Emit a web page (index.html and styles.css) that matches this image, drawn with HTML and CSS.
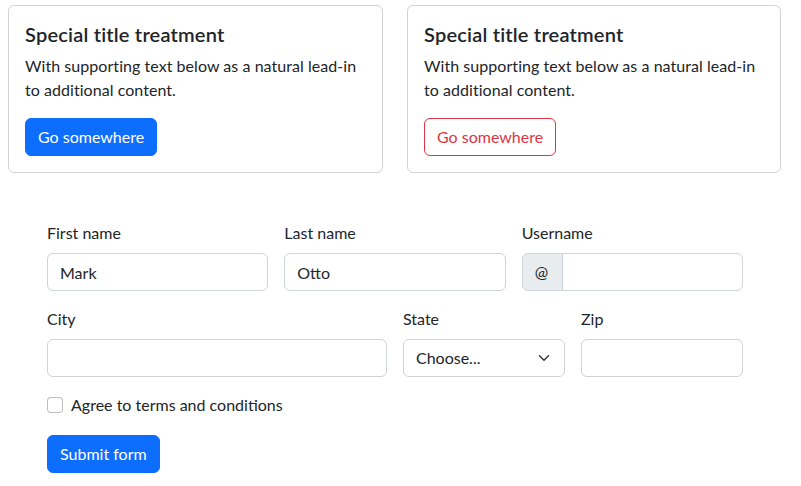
FILE: index.html
```html
<!DOCTYPE html>
<html lang="en">
<head>
<meta charset="utf-8">
<title>Cards and form</title>
<link rel="stylesheet" href="styles.css">
</head>
<body>
<div class="page">
  <div class="cards">
    <div class="card">
      <h5 class="card-title">Special title treatment</h5>
      <p class="card-text">With supporting text below as a natural lead-in to additional content.</p>
      <a href="#" class="btn btn-primary">Go somewhere</a>
    </div>
    <div class="card">
      <h5 class="card-title">Special title treatment</h5>
      <p class="card-text">With supporting text below as a natural lead-in to additional content.</p>
      <a href="#" class="btn btn-outline-danger">Go somewhere</a>
    </div>
  </div>

  <form class="form">
    <div class="field span-4">
      <label class="form-label" for="fn">First name</label>
      <input class="form-control" id="fn" type="text" value="Mark">
    </div>
    <div class="field span-4">
      <label class="form-label" for="ln">Last name</label>
      <input class="form-control" id="ln" type="text" value="Otto">
    </div>
    <div class="field span-4">
      <label class="form-label" for="un">Username</label>
      <div class="input-group">
        <span class="input-group-text">@</span>
        <input class="form-control" id="un" type="text">
      </div>
    </div>
    <div class="field span-6">
      <label class="form-label" for="city">City</label>
      <input class="form-control" id="city" type="text">
    </div>
    <div class="field span-3">
      <label class="form-label" for="state">State</label>
      <select class="form-select" id="state">
        <option>Choose...</option>
      </select>
    </div>
    <div class="field span-3">
      <label class="form-label" for="zip">Zip</label>
      <input class="form-control" id="zip" type="text">
    </div>
    <div class="field span-12">
      <div class="form-check">
        <input class="form-check-input" type="checkbox" id="agree">
        <label class="form-check-label" for="agree">Agree to terms and conditions</label>
      </div>
    </div>
    <div class="field span-12">
      <button class="btn btn-primary" type="submit">Submit form</button>
    </div>
  </form>
</div>
</body>
</html>
```

FILE: styles.css
```css
* { box-sizing: border-box; }
html, body { margin: 0; padding: 0; background: #fff; }
body {
  font-family: "Segoe UI", Lato, "Noto Sans", "Liberation Sans", sans-serif;
  font-size: 16px;
  line-height: 24px;
  color: #212529;
}
.page { padding: 5px 20px 0 8px; }

.cards {
  display: grid;
  grid-template-columns: 375px 374px;
  gap: 24px;
}
.card {
  border: 1px solid rgba(0,0,0,0.175);
  border-radius: 6px;
  padding: 16px;
}
.card-title {
  margin: 0 0 8px;
  font-size: 20px;
  font-weight: 600;
  line-height: 24px;
  letter-spacing: 0.2px;
}
.card-text { margin: 0 0 16px; letter-spacing: 0.05px; }

.btn {
  display: inline-block;
  font-family: inherit;
  font-size: 16px;
  line-height: 24px;
  padding: 6px 12px;
  border: 1px solid transparent;
  border-radius: 6px;
  text-decoration: none;
  cursor: pointer;
}
.btn-primary { background: #0d6efd; border-color: #0d6efd; color: #fff; }
.btn-outline-danger { background: #fff; border-color: #dc3545; color: #dc3545; }

.form {
  width: 696px;
  margin: 48px 0 0 39px;
  display: grid;
  grid-template-columns: repeat(12, 1fr);
  column-gap: 16px;
  row-gap: 16px;
}
.span-3 { grid-column: span 3; }
.span-4 { grid-column: span 4; }
.span-6 { grid-column: span 6; }
.span-12 { grid-column: span 12; }

.form-label { display: block; margin-bottom: 8px; }
.form-control, .form-select {
  display: block;
  width: 100%;
  height: 38px;
  padding: 6px 12px;
  font-family: inherit;
  font-size: 16px;
  line-height: 24px;
  color: #212529;
  background: #fff;
  border: 1px solid #ced4da;
  border-radius: 6px;
  margin: 0;
}
.form-select {
  appearance: none;
  -webkit-appearance: none;
  padding-right: 36px;
  background-image: url("data:image/svg+xml,%3csvg xmlns='http://www.w3.org/2000/svg' viewBox='0 0 16 16'%3e%3cpath fill='none' stroke='%23343a40' stroke-linecap='round' stroke-linejoin='round' stroke-width='2' d='m2 5 6 6 6-6'/%3e%3c/svg%3e");
  background-repeat: no-repeat;
  background-position: right 12px center;
  background-size: 16px 12px;
}
.input-group { display: flex; }
.input-group-text {
  display: flex;
  align-items: center;
  padding: 6px 12px;
  background: #e9ecef;
  border: 1px solid #ced4da;
  border-radius: 6px 0 0 6px;
  height: 38px;
  width: 41px;
}
.input-group .form-control {
  flex: 1;
  min-width: 0;
  margin-left: -1px;
  border-radius: 0 6px 6px 0;
}
.form-check {
  display: flex;
  align-items: flex-start;
  min-height: 24px;
  margin-bottom: 2px;
}
.form-check-input {
  appearance: none;
  -webkit-appearance: none;
  width: 16px;
  height: 16px;
  margin: 4px 8px 0 0;
  border: 1px solid rgba(0,0,0,0.25);
  border-radius: 4px;
  background: #fff;
  flex-shrink: 0;
}
```
